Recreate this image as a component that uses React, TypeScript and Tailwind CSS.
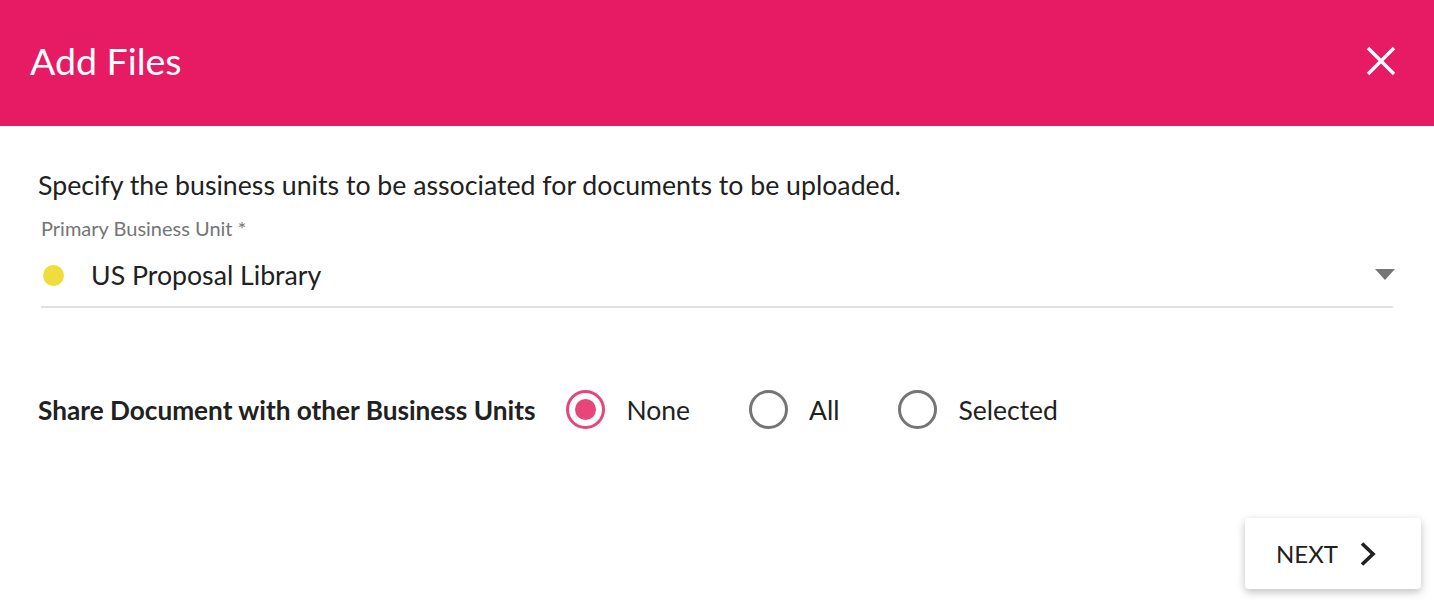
type Option = { label: string; checked?: boolean };

const options: Option[] = [
  { label: 'None', checked: true },
  { label: 'All' },
  { label: 'Selected' },
];

function Radio({ label, checked }: Option) {
  return (
    <label className="flex items-center gap-[21px]">
      <span
        className={
          checked
            ? 'flex h-[39px] w-[39px] items-center justify-center rounded-full border-[3px] border-[#e8457a]'
            : 'flex h-[39px] w-[39px] items-center justify-center rounded-full border-[3px] border-[#757575]'
        }
      >
        {checked && <span className="h-[21px] w-[21px] rounded-full bg-[#e8457a]" />}
      </span>
      <span className="text-[26.5px] leading-[32px] text-[#212121]">{label}</span>
    </label>
  );
}

export default function App() {
  return (
    <div className="h-[604px] w-[1434px] bg-white font-['Lato',sans-serif]">
      <header className="flex h-[126px] items-center justify-between bg-[#e71a64] pb-[4px] pl-[30px] pr-[38px]">
        <h1 className="text-[37.5px] font-normal leading-[44px] text-white">Add Files</h1>
        <svg width="30" height="30" viewBox="0 0 30 30">
          <path d="M2 2L28 28M28 2L2 28" stroke="white" strokeWidth="3.4" />
        </svg>
      </header>

      <div className="pl-[38px] pr-[13px] pt-[44px]">
        <p className="text-[26.7px] leading-[30px] text-[#212121]">
          Specify the business units to be associated for documents to be uploaded.
        </p>

        <div className="ml-[3px] mr-[28px] mt-[17px]">
          <div className="text-[20px] leading-[22px] text-[#757575]">Primary Business Unit *</div>
          <div className="flex h-[69px] items-center border-b-2 border-[#e0e0e0] pt-[6px]">
            <span className="ml-[2px] h-[21px] w-[21px] rounded-full bg-[#f0dc3c]" />
            <span className="ml-[27px] flex-1 text-[26.7px] text-[#212121]">US Proposal Library</span>
            <svg width="20" height="11" viewBox="0 0 20 11" className="mr-[-2px] mt-[-3px]">
              <path d="M0 0h20L10 11z" fill="#757575" />
            </svg>
          </div>
        </div>

        <div className="mt-[82px] flex items-center">
          <span className="mr-[31px] text-[26.2px] font-bold leading-[32px] text-[#212121]">
            Share Document with other Business Units
          </span>
          <div className="flex items-center gap-[59px]">
            {options.map(o => (
              <Radio key={o.label} {...o} />
            ))}
          </div>
        </div>

        <div className="mt-[89px] flex justify-end">
          <button className="flex h-[71px] w-[176px] items-center rounded-[4px] bg-white pl-[31px] text-[24px] text-[#212121] shadow-[0_3px_8px_rgba(0,0,0,0.25)]">
            NEXT
            <svg width="16" height="24" viewBox="0 0 16 24" className="ml-[22px]">
              <path d="M2 1.5L13 12L2 22.5" fill="none" stroke="#212121" strokeWidth="3.6" />
            </svg>
          </button>
        </div>
      </div>
    </div>
  );
}
